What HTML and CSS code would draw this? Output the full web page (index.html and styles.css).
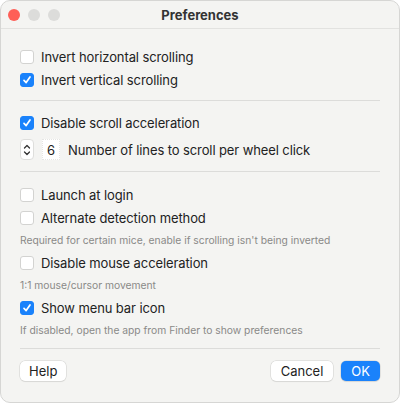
FILE: index.html
```html
<!DOCTYPE html>
<html lang="en">
<head>
    <meta charset="UTF-8">
    <title>Preferences</title>
    <link rel="stylesheet" href="styles.css">
</head>
<body>
    <div id="window">
        <div id="titlebar">
            <div id="lights">
                <span class="light close"></span>
                <span class="light"></span>
                <span class="light"></span>
            </div>
            <div id="title">Preferences</div>
        </div>

        <div id="content">
            <div class="group">
                <label class="row"><span class="check"></span>Invert horizontal scrolling</label>
                <label class="row"><span class="check on"></span>Invert vertical scrolling</label>
            </div>
            <div class="sep first"></div>
            <div class="group">
                <label class="row"><span class="check on"></span>Disable scroll acceleration</label>
                <div class="row lines">
                    <span class="stepper">
                        <svg width="8" height="14" viewBox="0 0 8 14">
                            <path d="M1.5 5 L4 2.5 L6.5 5 M1.5 9 L4 11.5 L6.5 9" fill="none" stroke="#333" stroke-width="1.3" stroke-linecap="round" stroke-linejoin="round"/>
                        </svg>
                    </span>
                    <span class="number">6</span>
                    Number of lines to scroll per wheel click
                </div>
            </div>
            <div class="sep"></div>
            <div class="group">
                <label class="row"><span class="check"></span>Launch at login</label>
                <label class="row"><span class="check"></span>Alternate detection method</label>
                <div class="note">Required for certain mice, enable if scrolling isn't being inverted</div>
                <label class="row"><span class="check"></span>Disable mouse acceleration</label>
                <div class="note">1:1 mouse/cursor movement</div>
                <label class="row"><span class="check on"></span>Show menu bar icon</label>
                <div class="note">If disabled, open the app from Finder to show preferences</div>
            </div>
            <div class="sep last"></div>
            <div id="buttons">
                <div class="btn">Help</div>
                <div class="spacer"></div>
                <div class="btn">Cancel</div>
                <div class="btn primary">OK</div>
            </div>
        </div>
    </div>
</body>
</html>
```

FILE: styles.css
```css
html, body {
    height: 100%;
}
body {
    margin: 0;
    background-color: #fff;
    font-family: Inter, "Liberation Sans", sans-serif;
    color: #222;
}
#window {
    height: 100%;
    box-sizing: border-box;
    background-color: #f4f4f2;
    border-radius: 10px;
    border: 1px solid #d6d6d4;
    display: flex;
    flex-direction: column;
    overflow: hidden;
}
#titlebar {
    height: 27px;
    border-bottom: 1px solid #e2e2e0;
    display: flex;
    align-items: center;
    position: relative;
}
#lights {
    display: flex;
    gap: 8px;
    padding-left: 7px;
}
.light {
    width: 12px;
    height: 12px;
    border-radius: 50%;
    background-color: #dcdcda;
}
.light.close {
    background-color: #fe5f57;
}
#title {
    position: absolute;
    left: 0;
    right: 0;
    text-align: center;
    font-size: 13px;
    font-weight: 700;
    color: #333;
}
#content {
    padding: 16px 19px 0 19px;
    display: flex;
    flex-direction: column;
}
.group {
    display: flex;
    flex-direction: column;
}
.row {
    height: 23px;
    display: flex;
    align-items: center;
    font-size: 13px;
    letter-spacing: -0.1px;
}
.row.lines {
    margin-top: 4px;
}
.check {
    width: 12px;
    height: 12px;
    border: 1px solid #d3d3d1;
    border-radius: 3px;
    background-color: #fff;
    margin-right: 7px;
    flex-shrink: 0;
}
.check.on {
    border-color: #1a82fb;
    background-color: #1a82fb;
    background-image: url("data:image/svg+xml,%3Csvg xmlns='http://www.w3.org/2000/svg' viewBox='0 0 14 14'%3E%3Cpath d='M3.5 7.5 L6 10 L10.5 3.5' fill='none' stroke='white' stroke-width='2' stroke-linecap='round' stroke-linejoin='round'/%3E%3C/svg%3E");
    background-size: 100%;
}
.stepper {
    width: 12px;
    height: 19px;
    border: 1px solid #dededc;
    border-radius: 4px;
    background-color: #fff;
    display: flex;
    align-items: center;
    justify-content: center;
    margin-right: 8px;
}
.number {
    width: 16px;
    height: 19px;
    display: flex;
    align-items: center;
    justify-content: center;
    background-color: #fff;
    border: 1px dotted #e6e6e4;
    margin-right: 8px;
}
.note {
    font-size: 10.3px;
    color: #8a8a88;
    height: 22px;
    line-height: 22px;
}
.sep {
    height: 1px;
    background-color: #dcdcda;
    margin: 10px 0 11px 0;
}
.sep.first {
    margin: 9px 0 10px 0;
}
.sep.last {
    margin: 7px 0 12px 0;
}
#buttons {
    display: flex;
    gap: 8px;
}
.spacer {
    flex-grow: 1;
}
.btn {
    height: 20px;
    padding: 0 10px;
    display: flex;
    align-items: center;
    font-size: 13px;
    background-color: #fff;
    border-radius: 5px;
    box-shadow: 0 0 0 0.5px #d0d0ce, 0 1px 1px rgba(0, 0, 0, 0.08);
}
.btn:first-child {
    padding: 0 9px;
}
.btn.primary {
    background-color: #1a82fb;
    color: #fff;
    padding: 0 10px;
}
```
